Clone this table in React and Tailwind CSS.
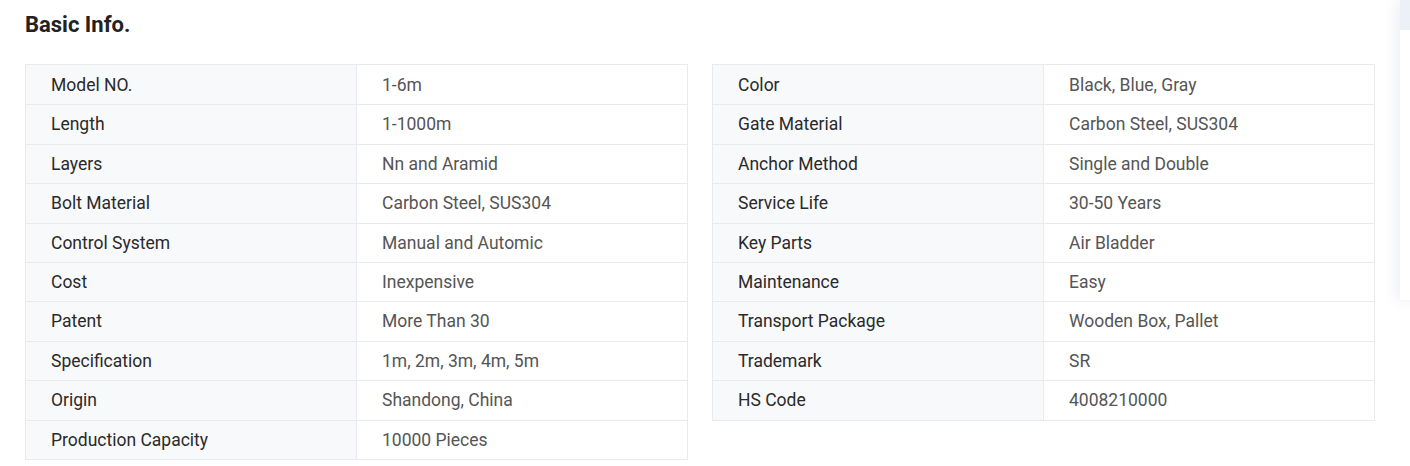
const LEFT = [
  ["Model NO.", "1-6m"],
  ["Length", "1-1000m"],
  ["Layers", "Nn and Aramid"],
  ["Bolt Material", "Carbon Steel, SUS304"],
  ["Control System", "Manual and Automic"],
  ["Cost", "Inexpensive"],
  ["Patent", "More Than 30"],
  ["Specification", "1m, 2m, 3m, 4m, 5m"],
  ["Origin", "Shandong, China"],
  ["Production Capacity", "10000 Pieces"],
];

const RIGHT = [
  ["Color", "Black, Blue, Gray"],
  ["Gate Material", "Carbon Steel, SUS304"],
  ["Anchor Method", "Single and Double"],
  ["Service Life", "30-50 Years"],
  ["Key Parts", "Air Bladder"],
  ["Maintenance", "Easy"],
  ["Transport Package", "Wooden Box, Pallet"],
  ["Trademark", "SR"],
  ["HS Code", "4008210000"],
];

function InfoTable({ rows }) {
  return (
    <div className="w-[663px] border border-[#e8eaee] self-start">
      {rows.map(([label, value], i) => (
        <div
          key={label}
          className={
            "flex h-[39.4px] " + (i > 0 ? "border-t border-[#e8eaee]" : "")
          }
        >
          <div className="w-[331px] shrink-0 bg-[#f8f9fb] border-r border-[#e8eaee] flex items-center pl-[25px] text-[#2a2a2a]">
            {label}
          </div>
          <div className="flex-1 bg-white flex items-center pl-[25px] text-[#555]">
            {value}
          </div>
        </div>
      ))}
    </div>
  );
}

export default function App() {
  return (
    <div className="relative w-[1410px] h-[466px] bg-white overflow-hidden font-['Roboto',sans-serif] text-[17.5px]">
      <div className="pl-[25px] pt-[11px]">
        <h2 className="text-[22px] font-bold text-[#222] leading-[28px]">Basic Info.</h2>
        <div className="flex gap-[24px] mt-[25px]">
          <InfoTable rows={LEFT} />
          <InfoTable rows={RIGHT} />
        </div>
      </div>

      {/* side panel peeking in from the right */}
      <div className="absolute left-[1400px] top-0 w-[300px] h-[300px] bg-white shadow-[-4px_0_12px_rgba(40,60,110,0.08)]">
        <div className="h-[30px] bg-[#ecf0f7]" />
      </div>
    </div>
  );
}
